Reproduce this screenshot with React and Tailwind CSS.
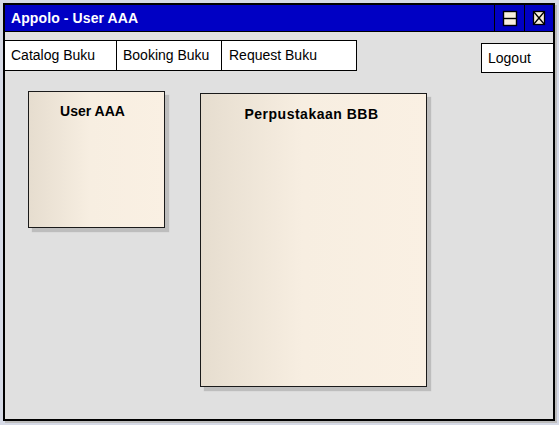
export default function App() {
  const font = { fontFamily: '"Liberation Sans", Arial, sans-serif' };
  return (
    <div className="w-[559px] h-[425px] bg-[#d6dae6] pl-[3px] pt-[3px] overflow-hidden" style={font}>
      <div className="w-[552px] h-[418px] border-2 border-black bg-[#e0e0e0] flex flex-col shadow-[2px_2px_0_#bcbcbc]">
        {/* title bar */}
        <div className="h-[27px] bg-[#0000c4] border-b border-black flex items-stretch">
          <div className="flex-1 flex items-center pl-[6px] text-white font-bold text-[14px] leading-none tracking-[0.1px]">
            Appolo - User AAA
          </div>
          <div className="w-[30px] border-l border-black flex items-center justify-center">
            <svg width="16" height="17" viewBox="0 0 16 17">
              <rect x="1.5" y="1.5" width="13" height="14" fill="#f8eedd" stroke="#000" strokeWidth="1.4" />
              <line x1="1.5" y1="8.5" x2="14.5" y2="8.5" stroke="#000" strokeWidth="1.4" />
            </svg>
          </div>
          <div className="w-[29px] border-l border-black flex items-center justify-center">
            <svg width="14" height="16" viewBox="0 0 14 16">
              <rect x="1.5" y="1.5" width="11" height="13" fill="#f8eedd" stroke="#000" strokeWidth="1.3" />
              <line x1="1.5" y1="1.5" x2="12.5" y2="14.5" stroke="#000" strokeWidth="1.3" />
              <line x1="12.5" y1="1.5" x2="1.5" y2="14.5" stroke="#000" strokeWidth="1.3" />
            </svg>
          </div>
        </div>
        {/* menu row */}
        <div className="flex items-start mt-[8px]">
          <div className="w-[112px] h-[31px] bg-white border border-l-0 border-black flex items-center pl-[6px] text-[14px] text-black">
            Catalog Buku
          </div>
          <div className="w-[105px] h-[31px] bg-white border border-l-0 border-black flex items-center pl-[6px] text-[14px] text-black">
            Booking Buku
          </div>
          <div className="w-[135px] h-[31px] bg-white border border-l-0 border-black flex items-center pl-[7px] text-[14px] text-black">
            Request Buku
          </div>
          <div className="ml-auto mt-[3px] w-[72px] h-[30px] bg-white border border-r-0 border-black flex items-center pl-[6px] text-[14px] text-black">
            Logout
          </div>
        </div>
        {/* cards */}
        <div className="flex items-start pl-[23px] mt-[18px]">
          <div className="w-[137px] h-[137px] border border-[#1a1a1a] bg-linear-to-r from-[#e6ddcf] via-[#f7eee1] via-45% to-[#faf0e3] shadow-[4px_4px_1px_#bdbdbd] flex justify-center pt-[12px] pr-[8px]">
            <span className="font-bold text-[14px] text-black leading-none">User AAA</span>
          </div>
          <div className="ml-[35px] mt-[2px] w-[227px] h-[294px] border border-[#1a1a1a] bg-linear-to-r from-[#e6ddcf] via-[#f7eee1] via-45% to-[#faf0e3] shadow-[4px_4px_1px_#bdbdbd] flex justify-center pt-[13px] pr-[4px]">
            <span className="font-bold text-[14px] text-black leading-none tracking-[0.5px]">Perpustakaan BBB</span>
          </div>
        </div>
      </div>
    </div>
  );
}
